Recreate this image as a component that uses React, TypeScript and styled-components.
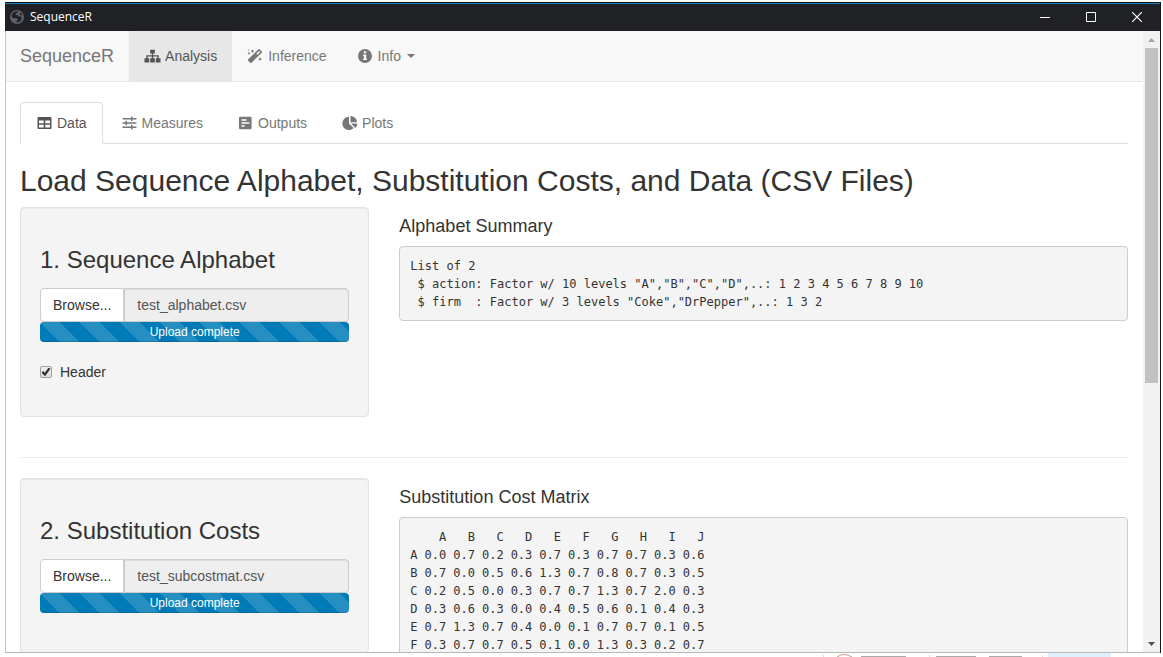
import React from "react";
import styled, { createGlobalStyle, css } from "styled-components";

const GlobalStyle = createGlobalStyle`
  *, *::before, *::after { box-sizing: border-box; }
  html, body, #root { height: 100%; }
  body {
    margin: 0;
    background: #fff;
    color: #333;
    font: 14px/20px "Liberation Sans", Arial, Helvetica, sans-serif;
    overflow: hidden;
  }
  h2, h3, h4 { font-weight: 400; margin: 0; color: #333; }
  button, input { font: inherit; }
`;

const Desktop = styled.div`
  height: 100vh;
  display: flex;
  flex-direction: column;
  padding: 2px 2px 0 5px;
`;

const Window = styled.div`
  flex: 1;
  min-height: 0;
  display: flex;
  flex-direction: column;
  border-right: 1px solid #16181b;
`;

const TitleBar = styled.header`
  flex: none;
  height: 29px;
  display: flex;
  align-items: center;
  padding-left: 5px;
  background: #202124;
  border-top: 1px solid #111;
  box-shadow: inset 0 1px 0 #1a80c4;
  color: #fff;
`;

const TitleText = styled.span`
  flex: 1;
  margin-left: 6px;
  font: 12px/20px "Open Sans", "Noto Sans", sans-serif;
`;

const CaptionButton = styled.button`
  width: 46px;
  height: 26px;
  padding: 0;
  border: 0;
  background: none;
  color: #fff;
  display: flex;
  align-items: center;
  justify-content: center;
`;

const Viewport = styled.div`
  flex: 1;
  min-height: 0;
  display: flex;
  border-bottom: 1px solid #b8b8b8;
`;

const Page = styled.div`
  flex: 1;
  min-width: 0;
  overflow: hidden;
  box-shadow: inset 1px 0 0 #c4c4c4;
`;

const NavBar = styled.nav`
  display: flex;
  height: 51px;
  margin: 0 0 20px 1px;
  background: #f8f8f8;
  border-bottom: 1px solid #e7e7e7;
`;

const Brand = styled.a`
  padding: 15px 15px 15px 14px;
  font-size: 18px;
  color: #777;
  text-decoration: none;
`;

const NavLink = styled.a<{ $active?: boolean }>`
  display: flex;
  align-items: center;
  gap: 4px;
  padding: 0 15px;
  color: ${(p) => (p.$active ? "#555" : "#777")};
  background: ${(p) => (p.$active ? "#e7e7e7" : "transparent")};
  text-decoration: none;
`;

const Caret = styled.span`
  margin-left: 2px;
  border-top: 4px solid;
  border-left: 4px solid transparent;
  border-right: 4px solid transparent;
`;

const Container = styled.main`
  padding: 0 15px;
`;

const Tabs = styled.div`
  display: flex;
  border-bottom: 1px solid #ddd;
`;

const Tab = styled.a<{ $active?: boolean }>`
  display: flex;
  align-items: center;
  gap: 4px;
  height: 42px;
  margin: 0 2px -1px 0;
  padding: 0 15px;
  border: 1px solid transparent;
  border-radius: 4px 4px 0 0;
  color: #777;
  text-decoration: none;
  ${(p) =>
    p.$active &&
    css`
      color: #555;
      background: #fff;
      border-color: #ddd #ddd #fff;
    `}
`;

const PageTitle = styled.h2`
  margin: 20px 0 10px;
  font-size: 30px;
  line-height: 33px;
`;

const Row = styled.section`
  display: flex;
  align-items: flex-start;
  margin: 0 -15px;
`;

const SideColumn = styled.div`
  flex: 0 0 calc(100% / 3);
  padding: 0 15px;
`;

const MainColumn = styled.div`
  flex: 1;
  min-width: 0;
  padding: 0 15px;
`;

const Well = styled.div`
  padding: 19px;
  background: #f4f4f4;
  border: 1px solid #e3e3e3;
  border-radius: 4px;
  box-shadow: inset 0 1px 1px rgba(0, 0, 0, 0.05);
`;

const WellTitle = styled.h3`
  margin: 20px 0 15px;
  font-size: 24px;
  line-height: 26px;
`;

const InputGroup = styled.div`
  display: flex;
  height: 34px;
`;

const BrowseButton = styled.button`
  flex: none;
  padding: 0 12px;
  color: #333;
  background: #fff;
  border: 1px solid #ccc;
  border-radius: 4px 0 0 4px;
`;

const FileName = styled.input`
  flex: 1;
  min-width: 0;
  padding: 0 12px;
  color: #555;
  background: #eee;
  border: 1px solid #ccc;
  border-radius: 0 4px 4px 0;
  box-shadow: inset 0 1px 1px rgba(0, 0, 0, 0.075);
`;

const Progress = styled.div`
  height: 20px;
  margin-bottom: 20px;
  border-radius: 4px;
  background: linear-gradient(
      45deg,
      rgba(255, 255, 255, 0.15) 25%,
      transparent 25%,
      transparent 50%,
      rgba(255, 255, 255, 0.15) 50%,
      rgba(255, 255, 255, 0.15) 75%,
      transparent 75%
    )
    0 0 / 40px 40px #007bb7;
  box-shadow: inset 0 -1px 0 rgba(0, 0, 0, 0.15);
  color: #fff;
  font-size: 12px;
  line-height: 20px;
  text-align: center;
`;

const CheckLabel = styled.label`
  display: flex;
  align-items: center;
  gap: 8px;
  margin-bottom: 15px;
`;

const CheckBox = styled.input`
  appearance: none;
  width: 12px;
  height: 12px;
  margin: 0;
  border: 1px solid #a0a0a0;
  border-radius: 2px;
  background: linear-gradient(#eee, #ddd);
  display: grid;
  place-items: center;
  &:checked::before {
    content: "";
    width: 9px;
    height: 9px;
    background: #333;
    clip-path: polygon(0 58%, 18% 40%, 36% 58%, 80% 0, 100% 14%, 40% 96%);
  }
`;

const OutputTitle = styled.h4`
  margin: 9px 0 10px;
  font-size: 18px;
  line-height: 20px;
`;

const outputBox = css`
  margin: 0;
  padding: 10px;
  font: 12px/18px "DejaVu Sans Mono", monospace;
  color: #333;
  background: #f4f4f4;
  border: 1px solid #ccc;
  border-radius: 4px;
`;

const Output = styled.pre`
  ${outputBox}
  height: 75px;
`;

const MatrixBox = styled.div`
  ${outputBox}
`;

const Matrix = styled.table`
  border-spacing: 0;
  font: inherit;
  th, td { padding: 0 0 0 7px; font-weight: 400; text-align: right; }
  th:first-child { padding-left: 0; }
`;

const Divider = styled.hr`
  margin: 40px 0 20px;
  border: 0;
  border-top: 1px solid #eee;
`;

const ScrollTrack = styled.div`
  flex: none;
  width: 17px;
  display: flex;
  flex-direction: column;
  align-items: center;
  background: #f1f1f1;
`;

const ScrollArrow = styled.button`
  flex: none;
  width: 17px;
  height: 17px;
  padding: 0;
  border: 0;
  background: none;
  display: grid;
  place-items: center;
`;

const ScrollThumb = styled.div`
  width: 13px;
  height: 54%;
  margin-bottom: auto;
  background: #c1c1c1;
`;

const Taskbar = styled.footer`
  flex: none;
  height: 4px;
  overflow: hidden;
  display: flex;
  justify-content: flex-end;
  padding-right: 50px;
`;

const Icon = ({ children, w = 17, x = 0, box = w }: { children: React.ReactNode; w?: number; x?: number; box?: number }) => (
  <svg width={w} height="14" viewBox={`${x} 0 ${box} 14`} fill="currentColor" aria-hidden="true">
    {children}
  </svg>
);

const SitemapIcon = () => (
  <Icon box={18}>
    <path d="M6.500.3h5v4H9.700v2h5.900v3.200h1.900V14h-5V9.500h1.600V7.500H9.700v2h1.800V14h-5V9.500h1.800v-2H3.900v2h1.600V14h-5V9.500h1.900V6.300h5.900v-2H6.500z" />
  </Icon>
);

const WandIcon = () => (
  <Icon>
    <path fillRule="evenodd" d="M11.300.4a1.100 1.100 0 0 1 1.500 0l1.900 1.900a1.100 1.100 0 0 1 0 1.500L4.600 13.700a1.100 1.100 0 0 1-1.500 0L1.200 11.800a1.100 1.100 0 0 1 0-1.500zM12.100 1.900 9.300 4.700l1.100 1.100 2.800-2.800z" />
    <path d="m5.500.2.6 1.400 1.400.6-1.400.6-.6 1.400-.6-1.400-1.400-.6 1.400-.6zM2 2.700l.5 1.100 1.100.5-1.100.5L2 5.900l-.5-1.100-1.100-.5 1.100-.5zM13 8l.6 1.500 1.500.6-1.500.6-.6 1.500-.6-1.500-1.500-.6 1.500-.6zM1.800 0l.3.700.7.300-.7.300-.3.700-.3-.7L.8 1l.7-.3z" />
  </Icon>
);

const InfoIcon = () => (
  <Icon x={-1}>
    <path fillRule="evenodd" d="M7 0a7 7 0 1 1 0 14A7 7 0 0 1 7 0zm-1.200 2.200v2h2.400v-2zM5 5.400v1.300h.9v3H5V11h4V9.700h-.8V5.400z" />
  </Icon>
);

const TableIcon = () => (
  <Icon x={-1}>
    <path fillRule="evenodd" d="M1.500 1h12a1 1 0 0 1 1 1v10a1 1 0 0 1-1 1h-12a1 1 0 0 1-1-1V2a1 1 0 0 1 1-1zM2 4.500v2.700h4.700V4.500zm6.300 0v2.700H13V4.500zM2 8.700v2.800h4.700V8.700zm6.300 0v2.800H13V8.700z" />
  </Icon>
);

const SlidersIcon = () => (
  <Icon x={-1}>
    <path d="M.5 2H9V.5h1.500V2h4v1.500h-4V5H9V3.500H.5zM.5 6.300h3V4.800H5v1.500h9.500v1.500H5v1.500H3.500V7.800h-3zM.5 10.600H9V9.100h1.500v1.500h4v1.500h-4v1.500H9v-1.500H.5z" />
  </Icon>
);

const PollIcon = () => (
  <Icon x={-1}>
    <path fillRule="evenodd" d="M2.300.8h10a1.300 1.300 0 0 1 1.300 1.300v9.800a1.300 1.300 0 0 1-1.300 1.300h-10A1.300 1.300 0 0 1 1 11.900V2.100A1.300 1.300 0 0 1 2.300.8zm1.200 2.500v1.500h5V3.300zm0 3v1.500h7.800V6.300zm0 3v1.500h3.100V9.300z" />
  </Icon>
);

const PieIcon = () => (
  <Icon x={-1}>
    <path d="M7 .8V7.500l4.600 4.600A6.600 6.600 0 1 1 7 .8zM8.500 0A6.500 6.500 0 0 1 15 6.300H8.500zM8.900 7.600h6.500a6.600 6.600 0 0 1-2 4.400z" />
  </Icon>
);

const GlobeIcon = () => (
  <svg width="14" height="14" viewBox="0 0 14 14" aria-hidden="true">
    <circle cx="7" cy="7" r="7" fill="#5f6368" />
    <path d="M4.500 1.700 8.300 1.200 7.500 2.800 5.600 3.600 5.800 5 7.800 5.200 8.500 6.500h2.300l.9 1.200-.5 2-2 2.300-2.700.6.300-1.800L8 9.200 6.200 8.300H3.500L1.400 6.200 2.300 3.600zM10.200 2.300l1.500 1.500.7 1.800-1.800-.4-.9-1.400z" fill="#202124" />
  </svg>
);

const columns = ["A", "B", "C", "D", "E", "F", "G", "H", "I", "J"];
const costs: [string, string][] = [
  ["A", "0.0 0.7 0.2 0.3 0.7 0.3 0.7 0.7 0.3 0.6"],
  ["B", "0.7 0.0 0.5 0.6 1.3 0.7 0.8 0.7 0.3 0.5"],
  ["C", "0.2 0.5 0.0 0.3 0.7 0.7 1.3 0.7 2.0 0.3"],
  ["D", "0.3 0.6 0.3 0.0 0.4 0.5 0.6 0.1 0.4 0.3"],
  ["E", "0.7 1.3 0.7 0.4 0.0 0.1 0.7 0.7 0.1 0.5"],
  ["F", "0.3 0.7 0.7 0.5 0.1 0.0 1.3 0.3 0.2 0.7"],
];

const alphabetSummary = `List of 2
 $ action: Factor w/ 10 levels "A","B","C","D",..: 1 2 3 4 5 6 7 8 9 10
 $ firm  : Factor w/ 3 levels "Coke","DrPepper",..: 1 3 2`;

const FileUpload = ({ file, label }: { file: string; label: string }) => (
  <>
    <InputGroup>
      <BrowseButton type="button">Browse...</BrowseButton>
      <FileName readOnly value={file} aria-label={label} />
    </InputGroup>
    <Progress role="progressbar" aria-label={label} aria-valuenow={100}>Upload complete</Progress>
  </>
);

export default function App() {
  return (
    <Desktop>
      <GlobalStyle />
      <Window>
        <TitleBar>
          <GlobeIcon />
          <TitleText>SequenceR</TitleText>
          <CaptionButton aria-label="Minimize">
            <svg width="10" height="10"><path d="M0 5.500h10" stroke="currentColor" /></svg>
          </CaptionButton>
          <CaptionButton aria-label="Maximize">
            <svg width="10" height="10"><path d="M.5.5h9v9h-9z" fill="none" stroke="currentColor" /></svg>
          </CaptionButton>
          <CaptionButton aria-label="Close">
            <svg width="10" height="10"><path d="m0 0 10 10M10 0 0 10" stroke="currentColor" strokeWidth="1.200" /></svg>
          </CaptionButton>
        </TitleBar>
        <Viewport>
          <Page>
            <NavBar>
              <Brand href="#">SequenceR</Brand>
              <NavLink href="#analysis" $active><SitemapIcon />Analysis</NavLink>
              <NavLink href="#inference"><WandIcon />Inference</NavLink>
              <NavLink href="#info"><InfoIcon />Info<Caret /></NavLink>
            </NavBar>
            <Container>
              <Tabs>
                <Tab href="#data" $active><TableIcon />Data</Tab>
                <Tab href="#measures"><SlidersIcon />Measures</Tab>
                <Tab href="#outputs"><PollIcon />Outputs</Tab>
                <Tab href="#plots"><PieIcon />Plots</Tab>
              </Tabs>
              <PageTitle>Load Sequence Alphabet, Substitution Costs, and Data (CSV Files)</PageTitle>
              <Row>
                <SideColumn>
                  <Well>
                    <WellTitle>1. Sequence Alphabet</WellTitle>
                    <FileUpload file="test_alphabet.csv" label="Sequence alphabet file" />
                    <CheckLabel><CheckBox type="checkbox" defaultChecked />Header</CheckLabel>
                  </Well>
                </SideColumn>
                <MainColumn>
                  <OutputTitle>Alphabet Summary</OutputTitle>
                  <Output>{alphabetSummary}</Output>
                </MainColumn>
              </Row>
              <Divider />
              <Row>
                <SideColumn>
                  <Well>
                    <WellTitle>2. Substitution Costs</WellTitle>
                    <FileUpload file="test_subcostmat.csv" label="Substitution costs file" />
                  </Well>
                </SideColumn>
                <MainColumn>
                  <OutputTitle>Substitution Cost Matrix</OutputTitle>
                  <MatrixBox>
                    <Matrix>
                      <thead>
                        <tr><th />{columns.map((c) => <th key={c} scope="col">{c}</th>)}</tr>
                      </thead>
                      <tbody>
                        {costs.map(([name, values]) => (
                          <tr key={name}>
                            <th scope="row">{name}</th>
                            {values.split(" ").map((v, i) => <td key={i}>{v}</td>)}
                          </tr>
                        ))}
                      </tbody>
                    </Matrix>
                  </MatrixBox>
                </MainColumn>
              </Row>
            </Container>
          </Page>
          <ScrollTrack>
            <ScrollArrow aria-label="Scroll up">
              <svg width="7" height="4"><path d="M0 4h7L3.500 0z" fill="#a3a3a3" /></svg>
            </ScrollArrow>
            <ScrollThumb />
            <ScrollArrow aria-label="Scroll down">
              <svg width="7" height="4"><path d="M0 0h7L3.500 4z" fill="#505050" /></svg>
            </ScrollArrow>
          </ScrollTrack>
        </Viewport>
      </Window>
      <Taskbar>
        <svg width="288" height="4" aria-hidden="true">
          <path d="M.5 2v2M106.500 2v2M219.500 2v2" stroke="#ddd" />
          <path d="M14 4q7-5 15 0" fill="none" stroke="#c98" />
          <path d="M38 3.500h45M113 3.500h40M166 3.500h33" stroke="#aaa" />
          <path d="M225 0h63v4h-63z" fill="#e0f0fd" />
        </svg>
      </Taskbar>
    </Desktop>
  );
}
